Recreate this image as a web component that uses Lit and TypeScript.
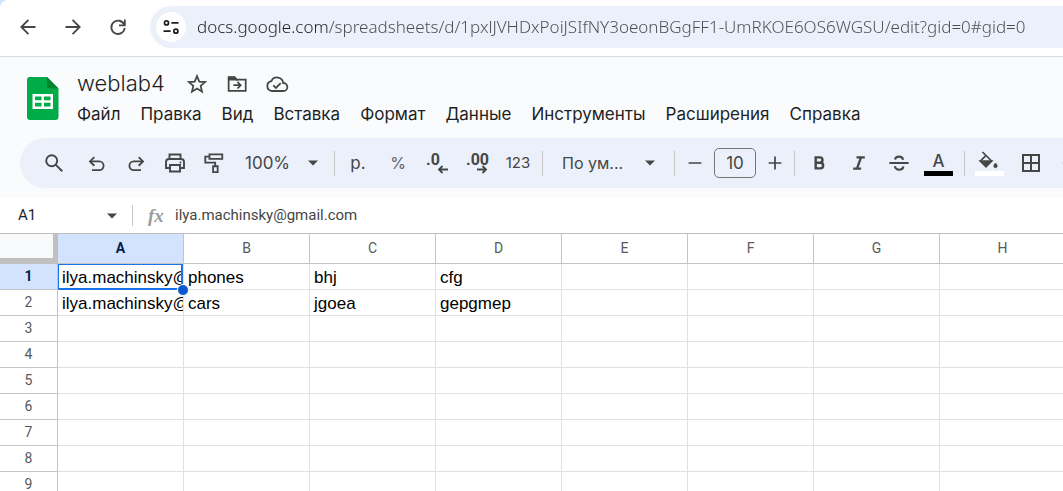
import { LitElement, html, svg, css } from "lit";
import { customElement, property } from "lit/decorators.js";

const stroke = (body: unknown, size = 24, width = 2) => html`<svg
  width=${size} height=${size} viewBox="0 0 24 24" fill="none" stroke="currentColor"
  stroke-width=${width} aria-hidden="true">${body}</svg>`;

const caret = html`<svg class="caret" width="10" height="6" viewBox="0 0 10 6" aria-hidden="true">
  <path d="M0 .5h10L5 5.5z" fill="currentColor" /></svg>`;

const icons = {
  back: stroke(svg`<path d="M21 12H4M12.500 3.500 4 12l8.500 8.500"/>`, 20, 2.2),
  forward: stroke(svg`<path d="M3 12h17M11.500 3.500 20 12l-8.500 8.500"/>`, 20, 2.2),
  reload: stroke(svg`<path d="M19.4 9.2A8 8 0 1 0 20 13.2"/><path d="M20.2 3v7h-7"/>`, 20, 2.2),
  tune: stroke(svg`<circle cx="6" cy="6.5" r="2.7"/><path d="M12.5 6.5H22M2 17.5h9.5"/><circle cx="18.5" cy="17.5" r="2.7"/>`, 18, 2.3),
  star: stroke(svg`<path d="M12 3.4l2.5 6 6.4.5-4.9 4.2 1.5 6.3-5.5-3.4-5.5 3.4L8 14.1 3.1 9.9l6.4-.5z" stroke-linejoin="miter"/>`, 22, 1.9),
  move: stroke(svg`<path d="M3 5h6.5l2 2.2H21.5v12.3H2.9V5z"/><path d="M3 4.6h6.4l2 2.6H3z" fill="currentColor"/><path d="M8 13.3h7.5M12.5 9.7l3.5 3.6-3.5 3.6"/>`, 22, 1.9),
  cloud: stroke(svg`<path d="M7 19a5 5 0 0 1-.6-9.9A6.2 6.2 0 0 1 18.2 11 4 4 0 0 1 18.5 19z"/><path d="M8.3 13.3l2.6 2.6 4.8-4.8"/>`, 24, 1.8),
  search: stroke(svg`<circle cx="9.5" cy="9.5" r="6"/><path d="M14 14l7 7"/>`, 22, 2.1),
  undo: stroke(svg`<path d="M6 20.500h8.700a5.200 5.200 0 0 0 0-10.400H4"/><path d="M8.800 4.900 3.600 10.100l5.200 5.200"/>`, 20, 2.2),
  redo: stroke(svg`<path d="M18 20.500H9.300a5.200 5.200 0 0 1 0-10.400H20"/><path d="M15.200 4.900l5.200 5.200-5.200 5.200"/>`, 20, 2.2),
  print: stroke(svg`<path d="M6.5 8V3.5h11V8M6.5 17H3V11a3 3 0 0 1 3-3h12a3 3 0 0 1 3 3v6h-3.5"/><path d="M7 14h10v6.5H7z"/><path d="M16.7 11.5h1.6"/>`, 24, 1.9),
  paint: stroke(svg`<path d="M7 2.5h14v5H7zM7 5H2.5v6.5h10.8V15M11 15.5h5V22h-5z"/>`, 22, 2),
  lessDecimals: html`<svg width="26" height="24" viewBox="0 0 26 24" aria-hidden="true"><text x="1" y="14">.0</text>
    <path d="M23 18.500h-9M17.500 15 14 18.500l3.500 3.500" fill="none" stroke="currentColor" stroke-width="1.8"/></svg>`,
  moreDecimals: html`<svg width="26" height="24" viewBox="0 0 26 24" aria-hidden="true"><text x="1" y="14">.00</text>
    <path d="M12 18.500h9M17.500 15 21 18.500 17.500 22" fill="none" stroke="currentColor" stroke-width="1.8"/></svg>`,
  minus: stroke(svg`<path d="M5 12h14"/>`, 22, 1.9),
  plus: stroke(svg`<path d="M5 12h14M12 5v14"/>`, 22, 1.9),
  bold: stroke(svg`<path d="M8 5.2h5a3.2 3.2 0 0 1 0 6.4H8zM8 11.6h5.6a3.4 3.4 0 0 1 0 6.8H8z"/>`, 20, 2.9),
  italic: stroke(svg`<path d="M9 5.3h10M5 18.7h9.5M14.3 5.5 9.7 18.5"/>`, 20, 2.8),
  strike: stroke(svg`<path d="M1.500 12h21"/><path d="M16.500 8.400C16 6 14.200 5 12 5 9.500 5 8 6.200 7.600 8.200M7.300 15.600C8 18 9.700 19.300 12 19.300c2.700 0 4.500-1.400 4.700-3.700"/>`, 22, 2.3),
  fill: html`<svg width="24" height="20" viewBox="0 0 24 20" aria-hidden="true" fill="none" stroke="currentColor" stroke-width="1.7">
    <path d="M5.500 1l9 9-5.500 5.500L3.500 10l5.800-5.800"/><path d="M3.500 10h11L9 15.500z" fill="currentColor"/>
    <path d="M18.500 12c1.200 1.500 1.700 2.300 1.700 3a1.700 1.700 0 0 1-3.400 0c0-.7.5-1.500 1.700-3z" fill="currentColor" stroke-width=".8"/></svg>`,
  borders: stroke(svg`<path d="M4 4h16v16H4zM12 4v16M4 12h16"/>`, 24, 2),
  merge: stroke(svg`<path d="M3 8V4h18v4M3 16v4h18v-4M1 12h8M23 12h-8M6.500 9l3 3-3 3M17.500 9l-3 3 3 3"/>`, 22, 2),
};

@customElement("browser-bar")
class BrowserBar extends LitElement {
  static styles = css`
    :host { display: flex; align-items: center; height: 57px; box-sizing: border-box; padding: 0 0 2px 14px;
      background: #fff; border-top-left-radius: 8px; border-bottom: 1px solid #dcdcdc; color: #474747; }
    button { border: 0; background: none; color: inherit; padding: 0; display: grid; place-items: center; }
    .nav { width: 28px; height: 28px; margin-right: 17px; }
    .address { flex: 1; min-width: 0; display: flex; align-items: center; gap: 11px; height: 42px;
      margin-left: 1px; padding-left: 6px; background: #ecf0fa; border-radius: 21px 0 0 21px; }
    .site { width: 30px; height: 30px; flex: none; border-radius: 50%; background: #fff; color: #1f1f1f; }
    .url { flex: 1; min-width: 0; border: 0; outline: 0; padding: 0; height: 30px;
      font: 350 17px/30px "Noto Sans", sans-serif; color: transparent; -webkit-background-clip: text; background-clip: text;
      background-image: linear-gradient(to right, #1f1f1f 131px, #4a4c50 131px); }
  `;
  render() {
    return html`
      <button class="nav" aria-label="Назад">${icons.back}</button>
      <button class="nav" aria-label="Вперёд">${icons.forward}</button>
      <button class="nav" aria-label="Обновить">${icons.reload}</button>
      <div class="address">
        <button class="site" aria-label="Сведения о сайте">${icons.tune}</button>
        <input class="url" aria-label="Адрес" spellcheck="false"
          .value=${"docs.google.com/spreadsheets/d/1pxlJVHDxPoiJSIfNY3oeonBGgFF1-UmRKOE6OS6WGSU/edit?gid=0#gid=0"} />
      </div>`;
  }
}

@customElement("doc-header")
class DocHeader extends LitElement {
  static styles = css`
    :host { display: flex; padding: 12px 0 9px 26px; gap: 18px; color: #444746; }
    .logo { margin-top: 8px; flex: none; }
    .title-row { display: flex; align-items: center; height: 30px; gap: 16px; }
    .title { width: 92px; box-sizing: border-box; border: 0; outline: 0; padding: 0 0 2px; background: none; height: 30px;
      font: 350 22px/28px Inter, sans-serif; color: #1f1f1f; }
    .icon { border: 0; background: none; color: inherit; padding: 0; width: 24px; height: 24px; display: grid; place-items: center; }
    .menu { display: flex; gap: 20px; height: 30px; align-items: center; }
    .menu button { border: 0; background: none; padding: 0; white-space: nowrap;
      font: 17px/24px Inter, sans-serif; color: #1f1f1f; }
  `;
  render() {
    const menu = ["Файл", "Правка", "Вид", "Вставка", "Формат", "Данные", "Инструменты", "Расширения", "Справка"];
    return html`
      <svg class="logo" width="33" height="44" viewBox="0 0 33 44" aria-hidden="true">
        <path d="M3 0h18l11.500 11.500V40a3 3 0 0 1-3 3H4a3 3 0 0 1-3-3V3a3 3 0 0 1 2-3z" fill="#00ac47"/>
        <path d="M21 0l11.500 11.500H24a3 3 0 0 1-3-3z" fill="#00832d"/>
        <path d="M6.500 17h20.500v15H6.500zM9 19.500v3.700h6.500v-3.700zm9 0v3.700h6.500v-3.700zM9 25.700v3.800h6.500v-3.800zm9 0v3.800h6.500v-3.800z" fill="#fff" fill-rule="evenodd"/>
      </svg>
      <div>
        <div class="title-row">
          <input class="title" aria-label="Название" .value=${"weblab4"} />
          <button class="icon" aria-label="Пометить">${icons.star}</button>
          <button class="icon" aria-label="Переместить">${icons.move}</button>
          <button class="icon" aria-label="Статус документа">${icons.cloud}</button>
        </div>
        <nav class="menu">${menu.map((m) => html`<button>${m}</button>`)}</nav>
      </div>`;
  }
}

@customElement("tool-bar")
class ToolBar extends LitElement {
  static styles = css`
    :host { display: flex; align-items: center; height: 50px; margin: 0 0 10px 20px; padding-left: 14px;
      background: #ecf0fa; border-radius: 25px 0 0 25px; color: #444746; overflow: hidden;
      font: 17px/24px Inter, sans-serif; }
    .group { display: flex; align-items: center; flex: none; }
    .sep { width: 1px; height: 25px; flex: none; background: #c7c7c7; }
    .tool { width: 40px; height: 36px; border: 0; padding: 0; background: none; color: inherit; font: inherit;
      display: grid; place-items: center; align-content: center; }
    .history .tool, .text .tool { width: 39px; }
    .history .tool:first-child { margin-right: 4px; }
    .formats { padding: 0 4px 0 3px; }
    .light { color: #5f6262; font-size: 16px; }
    .small { font-size: 15px; }
    .tool text { font: bold 16px Roboto, sans-serif; fill: currentColor; }
    .pick { display: grid; align-items: center; }
    .pick > * { grid-area: 1 / 1; }
    .pick select { appearance: none; border: 0; outline: 0; background: none; color: inherit; font: inherit; padding: 0 0 0 12px; height: 36px; }
    .zoom select { width: 101px; }
    .zoom .caret { margin-right: 16px; }
    .family select { width: 131px; padding-left: 19px; font-size: 16px; }
    .family .caret { margin-right: 19px; }
    .caret { justify-self: end; pointer-events: none; }
    .step { width: 39px; }
    .size { width: 42px; height: 30px; box-sizing: border-box; padding: 0; border: 1px solid #747775; border-radius: 5px;
      background: none; text-align: center; font: inherit; color: inherit; outline: 0; }
    .step:last-child { width: 38px; }
    .text { padding: 0 6px 0 4px; gap: 1px; }
    .swatch { width: 29px; height: 5px; background: #000; }
    .white { background: #fff; }
    .glyph { height: 20px; line-height: 20px; font-weight: 500; }
    .cells { padding-left: 4px; gap: 2px; }
  `;
  render() {
    const sep = html`<span class="sep"></span>`;
    const tool = (label: string, body: unknown, cls = "") =>
      html`<button class="tool ${cls}" aria-label=${label}>${body}</button>`;
    return html`
      <div class="group history">
        ${tool("Поиск", icons.search)}${tool("Отменить", icons.undo)}${tool("Повторить", icons.redo)}
        ${tool("Печать", icons.print)}${tool("Копировать форматирование", icons.paint)}
        <label class="pick zoom"><select aria-label="Масштаб"><option>100%</option></select>${caret}</label>
      </div>
      ${sep}
      <div class="group formats">
        ${tool("Денежный формат", "р.")}${tool("Процентный формат", "%", "light")}
        ${tool("Уменьшить число знаков", icons.lessDecimals)}${tool("Увеличить число знаков", icons.moreDecimals)}
        ${tool("Другие форматы", "123", "small")}
      </div>
      ${sep}
      <label class="pick family"><select aria-label="Шрифт"><option>По ум...</option></select>${caret}</label>
      ${sep}
      <div class="group">
        ${tool("Уменьшить размер", icons.minus, "step")}
        <input class="size" aria-label="Размер шрифта" .value=${"10"} />
        ${tool("Увеличить размер", icons.plus, "step")}
      </div>
      ${sep}
      <div class="group text">
        ${tool("Полужирный", icons.bold)}${tool("Курсив", icons.italic)}${tool("Зачёркнутый", icons.strike)}
        ${tool("Цвет текста", html`<span class="glyph">A</span><span class="swatch"></span>`)}
      </div>
      ${sep}
      <div class="group cells">
        ${tool("Цвет заливки", html`${icons.fill}<span class="swatch white"></span>`)}
        ${tool("Границы", icons.borders)}${tool("Объединить ячейки", icons.merge)}
      </div>`;
  }
}

@customElement("formula-bar")
class FormulaBar extends LitElement {
  static styles = css`
    :host { display: flex; align-items: center; height: 35px; background: #fff; color: #444746; }
    input { border: 0; outline: 0; padding: 0 0 2px; background: none; min-width: 0; height: 24px; }
    .name { display: flex; align-items: center; width: 132px; box-sizing: border-box; padding: 0 15px 0 18px; }
    .name input { flex: 1; font: 15px/24px Roboto, sans-serif; color: #1f1f1f; }
    .name button { border: 0; padding: 0; background: none; color: inherit; display: grid; }
    .sep { width: 1px; height: 21px; background: #c7c7c7; }
    .formula { flex: 1; display: flex; align-items: center; padding-left: 15px; gap: 10px; min-width: 0; }
    .fx { font: italic bold 19px/24px "Liberation Serif", serif; color: #9a9c9e; width: 17px; }
    .formula input { flex: 1; font: 15px/24px Roboto, sans-serif; color: #444746; }
  `;
  render() {
    return html`
      <div class="name"><input aria-label="Ячейка" .value=${"A1"} /><button aria-label="Диапазоны">${caret}</button></div>
      <span class="sep"></span>
      <label class="formula"><span class="fx">fx</span>
        <input aria-label="Формула" .value=${"ilya.machinsky@gmail.com"} /></label>`;
  }
}

@customElement("sheet-grid")
class SheetGrid extends LitElement {
  @property({ attribute: false }) columns = ["A", "B", "C", "D", "E", "F", "G", "H"];
  @property({ attribute: false }) rows: string[][] = [
    ["ilya.machinsky@", "phones", "bhj", "cfg"],
    ["ilya.machinsky@", "cars", "jgoea", "gepgmep"],
    [], [], [], [], [], [], [],
  ];
  static styles = css`
    :host { display: block; overflow: hidden; background: #fff; border-top: 1px solid #c0c0c0; }
    table { table-layout: fixed; border-collapse: separate; border-spacing: 0; width: 0; }
    .gutter { width: 58px; }
    .column { width: 126px; }
    th, td { box-sizing: border-box; padding: 0; border: 0 solid #e1e1e1; border-width: 0 1px 1px 0; height: 26px; }
    th { border-color: #c4c4c4; font: 14px/20px Roboto, sans-serif; color: #575a5a; padding-bottom: 2px; }
    thead th { height: 30px; }
    .corner { background: #f8f9fa; border-width: 0 5px 6px 0; border-color: #c0c0c0; }
    th.on { background: #d3e3fd; color: #041e49; font-weight: bold; }
    td { position: relative; font: 17px/24px "Liberation Sans", Arial, sans-serif; color: #000; }
    .value { overflow: hidden; white-space: nowrap; padding: 2px 0 0 4px; height: 23px; }
    .cursor { position: absolute; inset: 0 0 -1px 0; border: solid #1a73e8; border-width: 1px 2px 2px 1px; z-index: 1; }
    .handle { position: absolute; right: -8px; bottom: -8px; width: 10px; height: 10px; border-radius: 50%;
      background: #0b57d0; border: 1px solid #fff; }
  `;
  render() {
    return html`<table>
      <colgroup><col class="gutter" />${this.columns.map(() => html`<col class="column" />`)}</colgroup>
      <thead><tr><th class="corner"></th>
        ${this.columns.map((c, i) => html`<th scope="col" class=${i === 0 ? "on" : ""}>${c}</th>`)}</tr></thead>
      <tbody>${this.rows.map((row, r) => html`<tr>
        <th scope="row" class=${r === 0 ? "on" : ""}>${r + 1}</th>
        ${this.columns.map((_, c) => html`<td><div class="value">${row[c] ?? ""}</div>${r === 0 && c === 0
          ? html`<span class="cursor"><span class="handle"></span></span>` : ""}</td>`)}
      </tr>`)}</tbody>
    </table>`;
  }
}

@customElement("app-root")
class AppRoot extends LitElement {
  static styles = css`
    :host { display: flex; flex-direction: column; height: 100vh; overflow: hidden; background: #d3e3fd; }
    .chrome { background: #f9fbfd; flex: none; }
    .sheet { flex: 1; min-height: 0; }
  `;
  render() {
    return html`<browser-bar></browser-bar>
      <div class="chrome"><doc-header></doc-header><tool-bar></tool-bar></div>
      <formula-bar></formula-bar>
      <sheet-grid class="sheet"></sheet-grid>`;
  }
}
